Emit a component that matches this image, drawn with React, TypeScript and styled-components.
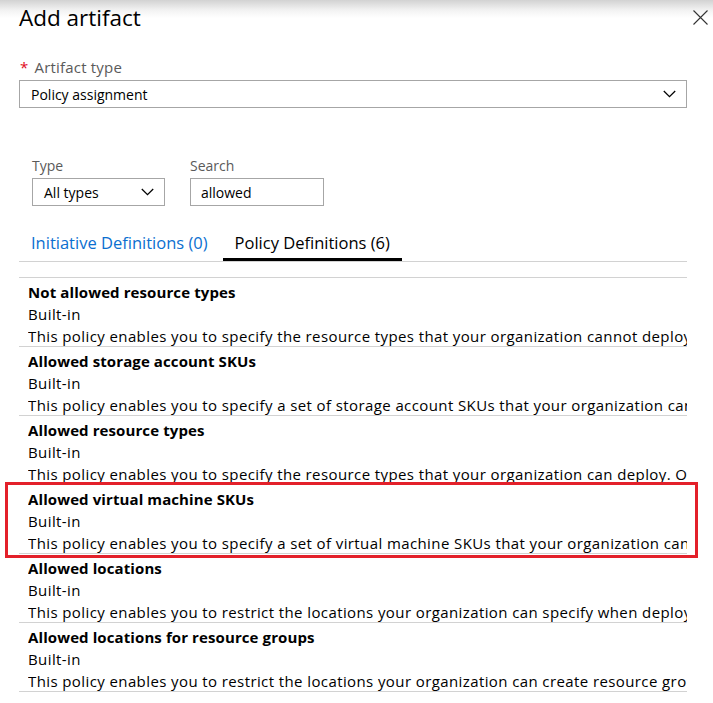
import styled, { createGlobalStyle } from 'styled-components';

const GlobalStyle = createGlobalStyle`
  html, body {
    margin: 0;
    padding: 0;
    background: #fff;
  }
  body {
    font-family: "Open Sans", "Noto Sans", sans-serif;
    color: #000;
  }
`;

const Panel = styled.div`
  width: 713px;
  height: 703px;
  overflow: hidden;
  background: linear-gradient(to bottom, #d2d2d2 0px, #f2f2f2 10px, #fff 18px);
`;

const Header = styled.div`
  display: flex;
  justify-content: space-between;
  align-items: flex-start;
  padding: 3px 5px 0 19px;
`;

const Title = styled.h1`
  margin: 0;
  font-size: 22.5px;
  line-height: 30px;
  font-weight: 400;
  color: #000;
`;

const CloseButton = styled.button`
  border: none;
  background: none;
  padding: 0;
  margin-top: 7px;
  width: 15px;
  height: 15px;
  display: flex;
  cursor: pointer;
`;

const Body = styled.div`
  padding: 0 26px 0 19px;
`;

const Field = styled.div<{ $mt: number }>`
  display: flex;
  flex-direction: column;
  margin-top: ${(p) => p.$mt}px;
`;

const Label = styled.label`
  font-size: 15px;
  line-height: 20px;
  letter-spacing: 0.2px;
  color: #5a5a5a;
  margin-bottom: 3px;
`;

const Required = styled.span`
  color: #e00b1c;
  margin-right: 6px;
  margin-left: 1px;
`;

const SelectBox = styled.div<{ $width?: number }>`
  box-sizing: border-box;
  height: 28px;
  width: ${(p) => (p.$width ? `${p.$width}px` : '100%')};
  border: 1px solid #a6a6a6;
  display: flex;
  align-items: center;
  justify-content: space-between;
  padding: 0 10px 0 11px;
  font-size: 14px;
  color: #000;
  background: #fff;
`;

const TextInput = styled.input<{ $width: number }>`
  box-sizing: border-box;
  height: 28px;
  width: ${(p) => p.$width}px;
  border: 1px solid #a6a6a6;
  padding: 0 10px;
  font-family: inherit;
  font-size: 14px;
  color: #000;
  outline: none;
`;

const Filters = styled.div`
  display: flex;
  gap: 25px;
  padding-left: 13px;
  margin-top: 48px;
`;

const FilterColumn = styled.div`
  display: flex;
  flex-direction: column;
`;

const FilterLabel = styled.span`
  font-size: 14px;
  line-height: 20px;
  color: #5a5a5a;
  margin-bottom: 2px;
`;

const Tabs = styled.div`
  display: flex;
  gap: 3px;
  margin-top: 26px;
  border-bottom: 1px solid #d2d2d2;
`;

const Tab = styled.div<{ $active?: boolean }>`
  padding: 0 12px 4px;
  font-size: 16.5px;
  line-height: 22px;
  color: ${(p) => (p.$active ? '#000' : '#0b6fd0')};
  border-bottom: 3px solid ${(p) => (p.$active ? '#000' : 'transparent')};
  cursor: pointer;
`;

const List = styled.div`
  margin-top: 15px;
  border-top: 1px solid #d2d2d2;
`;

const Row = styled.div`
  position: relative;
  padding: 3px 0 0 9px;
  border-bottom: 1px solid #d2d2d2;
  font-size: 15px;
  line-height: 22px;
  white-space: nowrap;
`;

const RowText = styled.div`
  overflow: hidden;
  height: 65px;
`;

const RowTitle = styled.div`
  font-weight: 700;
  letter-spacing: 0.1px;
`;

const RowLine = styled.div`
  letter-spacing: 0.4px;
`;

const Highlight = styled.div`
  position: absolute;
  top: -3px;
  left: -14px;
  right: -11px;
  bottom: -5px;
  border: 3px solid #e3202a;
  pointer-events: none;
`;

const Chevron = () => (
  <svg width="13" height="8" viewBox="0 0 13 8" fill="none">
    <path d="M0.8 1 L6.5 6.6 L12.2 1" stroke="#000" strokeWidth="1.3" />
  </svg>
);

const CloseIcon = () => (
  <svg width="15" height="15" viewBox="0 0 15 15" fill="none">
    <path d="M0.5 0.5 L14.5 14.5 M14.5 0.5 L0.5 14.5" stroke="#333" strokeWidth="1.1" />
  </svg>
);

const policies = [
  {
    name: 'Not allowed resource types',
    description:
      'This policy enables you to specify the resource types that your organization cannot deploy.',
  },
  {
    name: 'Allowed storage account SKUs',
    description:
      'This policy enables you to specify a set of storage account SKUs that your organization can deploy.',
  },
  {
    name: 'Allowed resource types',
    description:
      'This policy enables you to specify the resource types that your organization can deploy. Only resource types that support tags and location will be affected.',
  },
  {
    name: 'Allowed virtual machine SKUs',
    description:
      'This policy enables you to specify a set of virtual machine SKUs that your organization can deploy.',
    highlighted: true,
  },
  {
    name: 'Allowed locations',
    description:
      'This policy enables you to restrict the locations your organization can specify when deploying resources.',
  },
  {
    name: 'Allowed locations for resource groups',
    description:
      'This policy enables you to restrict the locations your organization can create resource groups in.',
  },
];

const App = () => {
  return (
    <Panel>
      <GlobalStyle />
      <Header>
        <Title>Add artifact</Title>
        <CloseButton aria-label="Close">
          <CloseIcon />
        </CloseButton>
      </Header>
      <Body>
        <Field $mt={24}>
          <Label>
            <Required>*</Required>Artifact type
          </Label>
          <SelectBox>
            <span>Policy assignment</span>
            <Chevron />
          </SelectBox>
        </Field>
        <Filters>
          <FilterColumn>
            <FilterLabel>Type</FilterLabel>
            <SelectBox $width={133}>
              <span>All types</span>
              <Chevron />
            </SelectBox>
          </FilterColumn>
          <FilterColumn>
            <FilterLabel>Search</FilterLabel>
            <TextInput $width={134} defaultValue="allowed" />
          </FilterColumn>
        </Filters>
        <Tabs>
          <Tab>Initiative Definitions (0)</Tab>
          <Tab $active>Policy Definitions (6)</Tab>
        </Tabs>
        <List>
          {policies.map((p) => (
            <Row key={p.name}>
              <RowText>
                <RowTitle>{p.name}</RowTitle>
                <RowLine>Built-in</RowLine>
                <RowLine>{p.description}</RowLine>
              </RowText>
              {p.highlighted && <Highlight />}
            </Row>
          ))}
        </List>
      </Body>
    </Panel>
  );
};

export default App;
